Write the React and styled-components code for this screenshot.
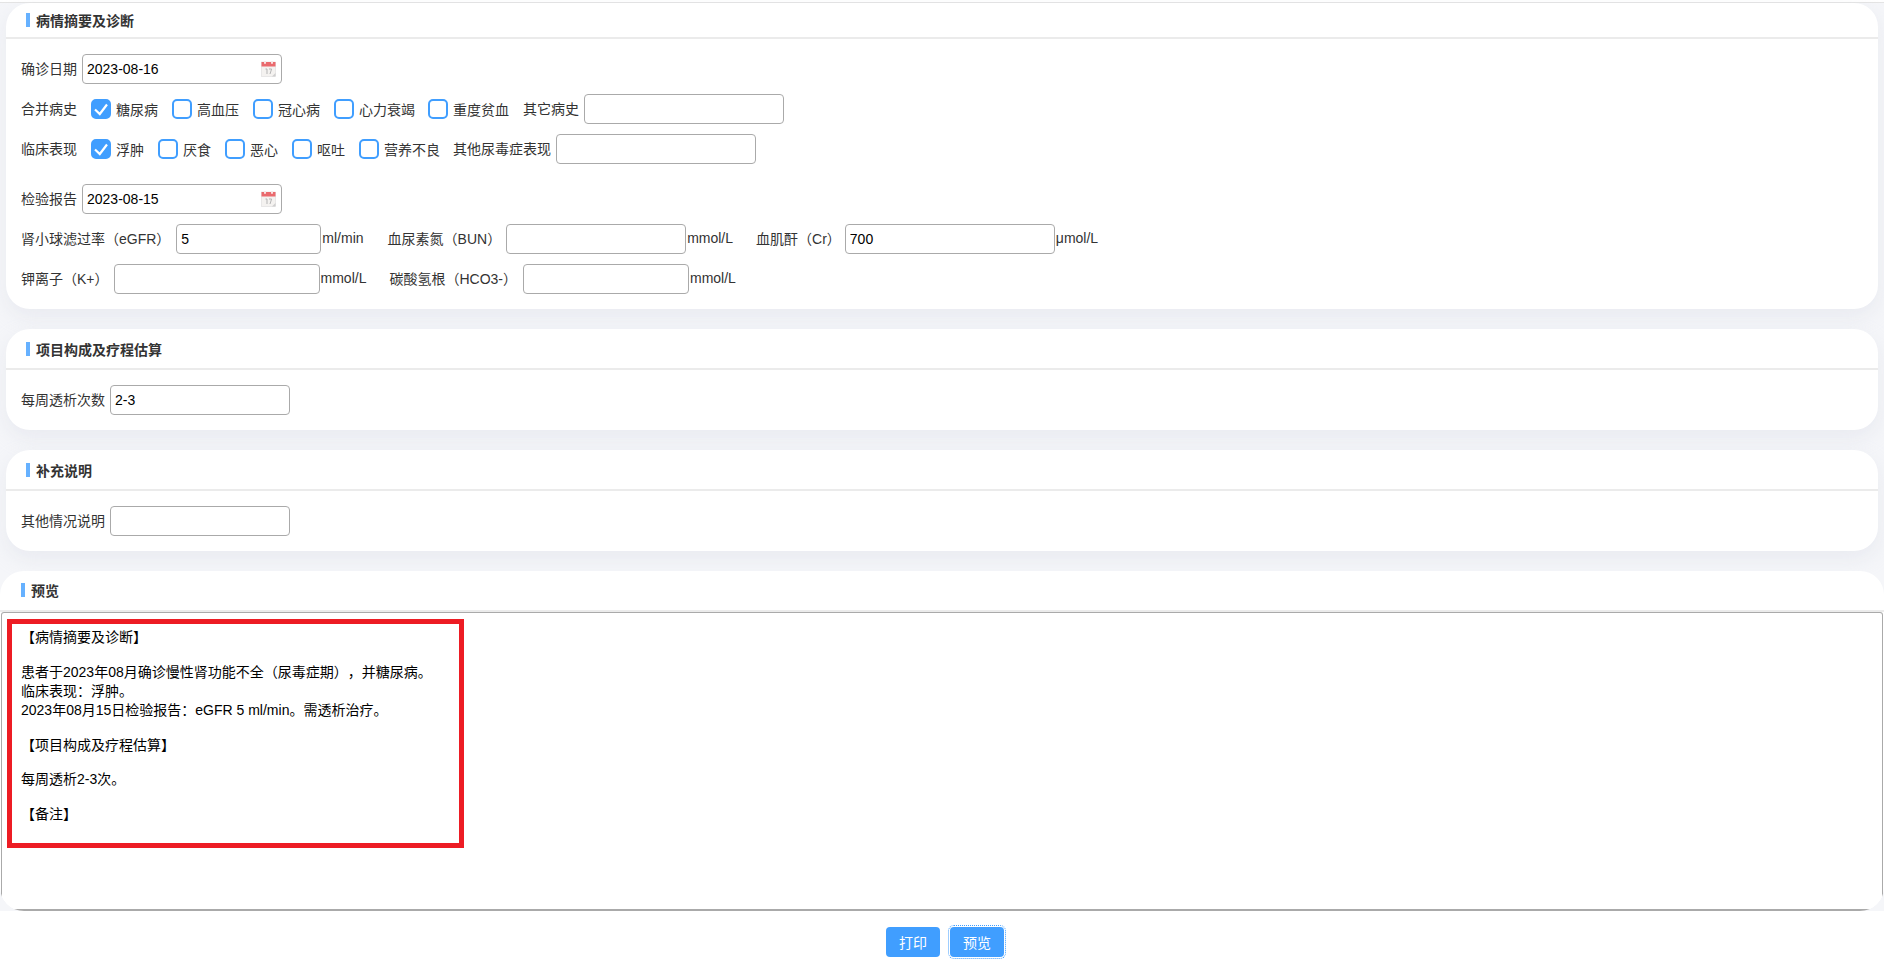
import React from "react";
import styled, { createGlobalStyle } from "styled-components";

const Global = createGlobalStyle`
  html, body { margin: 0; padding: 0; background: #f5f6f9; }
  body {
    width: 1884px; height: 971px; overflow: hidden; font-size: 14px; color: #333;
    font-family: "Liberation Sans", "Noto Sans CJK SC", sans-serif;
    text-spacing-trim: space-all;
  }
`;
const Page = styled.div`
  height: 971px; display: flex; flex-direction: column; box-sizing: border-box; background: #f5f6f9;
`;
const TopRule = styled.div`height: 2px; background: #fff; border-bottom: 1px solid #e4e4e4; flex: none;`;
const Sections = styled.div`padding: 0 6px; display: flex; flex-direction: column; gap: 20px;`;
const Card = styled.section`
  background: #fff; border-radius: 24px; box-shadow: 0 8px 20px rgba(205,210,222,.3);
  height: ${p => p.$h}px; box-sizing: border-box;
`;
const Header = styled.div`
  height: ${p => p.$h || 41}px; box-sizing: border-box; border-bottom: 2px solid #ebebeb;
  display: flex; align-items: center; padding-left: ${p => p.$pad || 20}px; padding-bottom: ${p => p.$pb || 0}px;
  font-weight: 700; color: #333; gap: 6px;
`;
const Bar = styled.i`width: 4px; height: 14px; background: #66b1ff; display: block; flex: none;`;
const Body = styled.div`padding: 15px 15px 0; display: flex; flex-direction: column;`;
const Row = styled.div`display: flex; align-items: center; height: 30px; margin-bottom: ${p => p.$mb ?? 10}px;`;
const Label = styled.span`
  margin-right: ${p => p.$gap ?? 5}px; margin-left: ${p => p.$left || 0}px; padding-bottom: 2px; white-space: nowrap;
`;
const Input = styled.input`
  width: ${p => p.$w || 200}px; height: 30px; box-sizing: border-box; border: 1px solid #aaa; border-radius: 4px;
  padding: 0 4px; font: 14px "Liberation Sans", sans-serif; color: #000; background: #fff; outline: none; flex: none;
`;
const Unit = styled.span`margin-left: 1px; padding-bottom: 2px; white-space: nowrap;`;
const DateWrap = styled.div`position: relative; width: 200px; height: 30px;`;
const CalIcon = styled.svg`position: absolute; right: 6px; top: 7px; width: 15px; height: 16px;`;
const Check = styled.span`
  width: 20px; height: 20px; box-sizing: border-box; border: 2px solid #409eff; border-radius: 5px;
  background: ${p => (p.$on ? "#409eff" : "#fff")}; display: flex; align-items: center; justify-content: center; margin-right: 5px;
`;
const Option = styled.label`
  display: flex; align-items: center; margin-right: ${p => p.$mr ?? 14}px; white-space: nowrap;
`;
const Preview = styled.section`
  margin-top: 20px; height: 340px; background: #fff; border-radius: 24px; box-sizing: border-box;
  display: flex; flex-direction: column; overflow: hidden; flex: none;
`;
const Sheet = styled.div`
  flex: 1; margin: 0 1px; border: 1px solid #aaa; border-width: 1px 1px 2px 1px; border-radius: 3px 3px 0 0;
  padding: 6px 5px; background: #fff; color: #000;
`;
const Marked = styled.div`
  width: 457px; height: 229px; box-sizing: border-box; border: 5px solid #ed1c24; padding: 4px 0 0 9px; line-height: 19.3px;
`;
const Para = styled.p`margin: 0 0 15.3px;`;
const Footer = styled.footer`
  flex: 1; background: #fff; display: flex; justify-content: center; align-items: flex-start;
  padding: 16px 0 0 6px; gap: 10px;
`;
const Btn = styled.button`
  width: 54px; height: 30px; border: 0; border-radius: 4px; background: #409eff; color: #fff; padding: 0;
  font: 14px "Liberation Sans", "Noto Sans CJK SC", sans-serif;
  outline: ${p => (p.$focus ? "1px dotted #409eff" : "none")}; outline-offset: 1px;
`;

const Cal = () => (
  <CalIcon viewBox="0 0 15 16">
    <rect x="0.5" y="1" width="14" height="14.5" fill="#f4f2f0" stroke="#ddd" strokeWidth=".6" />
    <rect x="0.5" y="1" width="14" height="4.5" fill="#ea6a6e" />
    <rect x="3" y="0" width="2" height="3" rx="1" fill="#f8e0e0" />
    <rect x="10" y="0" width="2" height="3" rx="1" fill="#f8e0e0" />
    <path d="M4.5 8h1.5v5M8 8h2.6L9 13" fill="none" stroke="#b5b5b5" strokeWidth="1" />
    <path d="M11 15.5 14.5 12v3.5z" fill="#cfcfcf" />
  </CalIcon>
);
const DateField = ({ value }) => (
  <DateWrap><Input readOnly value={value} /><Cal /></DateWrap>
);
const Opt = ({ on, mr, children }) => (
  <Option $mr={mr}>
    <Check $on={on}>
      {on && (
        <svg width="16" height="16" viewBox="0 0 16 16">
          <path d="M2 8.5 6.8 13 14 3.5" fill="none" stroke="#fff" strokeWidth="2.2" />
        </svg>
      )}
    </Check>
    {children}
  </Option>
);
const Head = ({ children, pad, h, pb }) => <Header $pad={pad} $h={h} $pb={pb}><Bar />{children}</Header>;

export default function App() {
  return (
    <Page>
      <Global />
      <TopRule />
      <Sections>
        <Card $h={306}>
          <Head h={36}>病情摘要及诊断</Head>
          <Body>
            <Row><Label>确诊日期</Label><DateField value="2023-08-16" /></Row>
            <Row>
              <Label $gap={14}>合并病史</Label>
              <Opt on>糖尿病</Opt><Opt>高血压</Opt><Opt>冠心病</Opt><Opt mr={13}>心力衰竭</Opt><Opt>重度贫血</Opt>
              <Label>其它病史</Label><Input />
            </Row>
            <Row $mb={20}>
              <Label $gap={14}>临床表现</Label>
              <Opt on>浮肿</Opt><Opt>厌食</Opt><Opt>恶心</Opt><Opt>呕吐</Opt><Opt mr={13}>营养不良</Opt>
              <Label>其他尿毒症表现</Label><Input />
            </Row>
            <Row><Label>检验报告</Label><DateField value="2023-08-15" /></Row>
            <Row>
              <Label $gap={6}>肾小球滤过率（eGFR）</Label><Input $w={145} defaultValue="5" />
              <Unit>ml/min</Unit>
              <Label $left={24} $gap={5}>血尿素氮（BUN）</Label><Input $w={180} />
              <Unit>mmol/L</Unit>
              <Label $left={23} $gap={4}>血肌酐（Cr）</Label><Input $w={210} defaultValue="700" />
              <Unit>μmol/L</Unit>
            </Row>
            <Row>
              <Label $gap={5}>钾离子（K+）</Label><Input $w={206} />
              <Unit>mmol/L</Unit>
              <Label $left={23} $gap={6}>碳酸氢根（HCO3-）</Label><Input $w={166} />
              <Unit>mmol/L</Unit>
            </Row>
          </Body>
        </Card>
        <Card $h={101}>
          <Head>项目构成及疗程估算</Head>
          <Body>
            <Row><Label>每周透析次数</Label><Input $w={180} defaultValue="2-3" /></Row>
          </Body>
        </Card>
        <Card $h={101}>
          <Head>补充说明</Head>
          <Body>
            <Row><Label>其他情况说明</Label><Input $w={180} /></Row>
          </Body>
        </Card>
      </Sections>
      <Preview>
        <Head pad={21} h={41} pb={2}>预览</Head>
        <Sheet>
          <Marked>
            <Para>【病情摘要及诊断】</Para>
            <Para>患者于2023年08月确诊慢性肾功能不全（尿毒症期），并糖尿病。<br />临床表现：浮肿。<br />2023年08月15日检验报告：eGFR 5 ml/min。需透析治疗。</Para>
            <Para>【项目构成及疗程估算】</Para>
            <Para>每周透析2-3次。</Para>
            <Para>【备注】</Para>
          </Marked>
        </Sheet>
      </Preview>
      <Footer>
        <Btn>打印</Btn>
        <Btn $focus>预览</Btn>
      </Footer>
    </Page>
  );
}
